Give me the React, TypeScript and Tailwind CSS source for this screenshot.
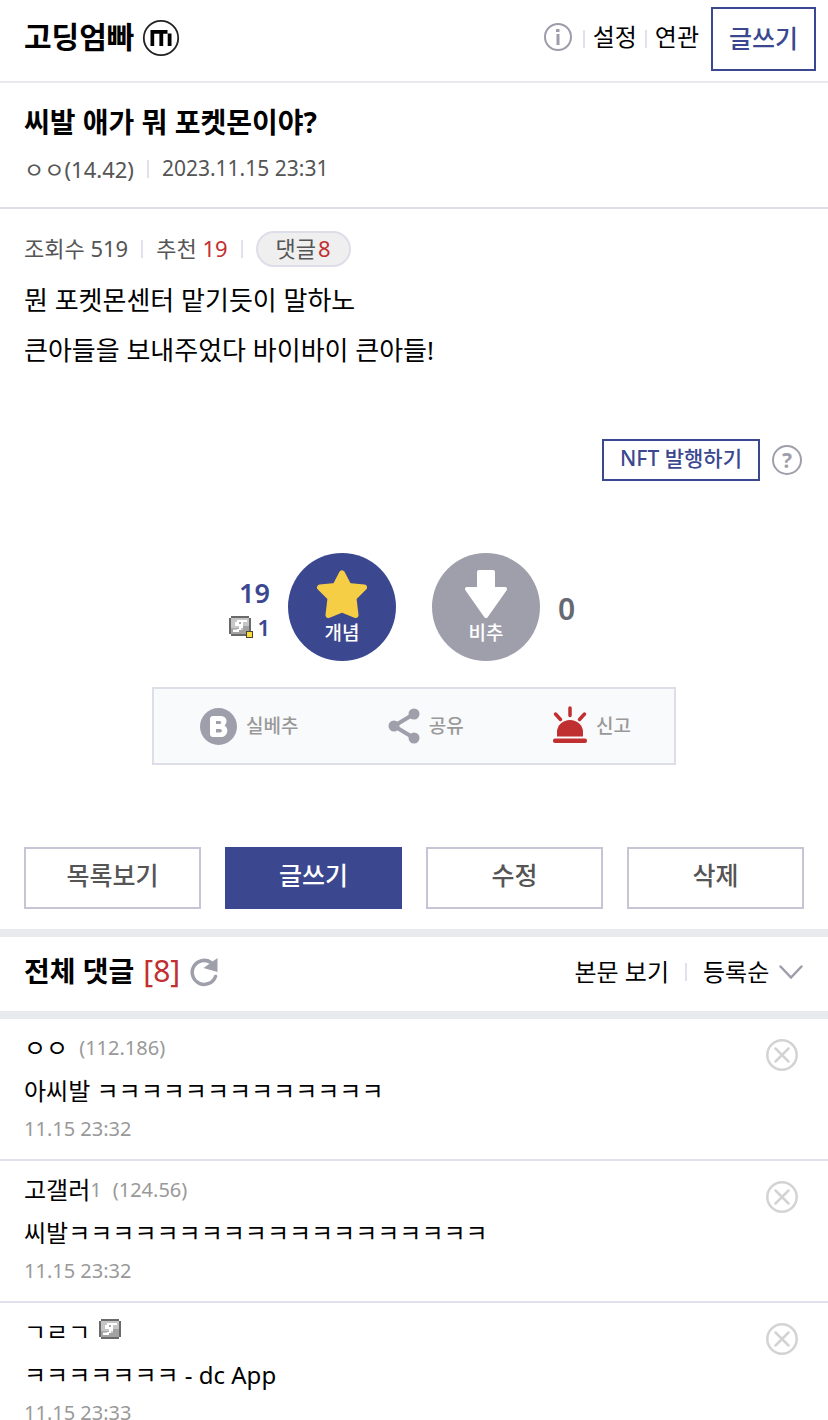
import type { ReactNode } from 'react'

type Comment = {
  id: number
  name: string
  suffix?: string
  ip?: string
  badge?: boolean
  text: string
  date: string
}

const comments: Comment[] = [
  { id: 1, name: 'ㅇㅇ', ip: '(112.186)', text: '아씨발 ㅋㅋㅋㅋㅋㅋㅋㅋㅋㅋㅋㅋㅋ', date: '11.15 23:32' },
  { id: 2, name: '고갤러', suffix: '1', ip: '(124.56)', text: '씨발ㅋㅋㅋㅋㅋㅋㅋㅋㅋㅋㅋㅋㅋㅋㅋㅋㅋㅋㅋ', date: '11.15 23:32' },
  { id: 3, name: 'ㄱㄹㄱ', badge: true, text: 'ㅋㅋㅋㅋㅋㅋㅋ - dc App', date: '11.15 23:33' },
]

const Bar = ({ className = '' }: { className?: string }) => (
  <span className={`h-[18px] w-[2px] bg-[#e0e0ee] ${className}`} />
)

// 고정닉 배지
const NickBadge = ({ half = false }: { half?: boolean }) => (
  <svg width="24" height="22" viewBox="0 0 24 22" shapeRendering="crispEdges" aria-hidden="true">
    <path d="M2 0h18v2h2v16h-2v2H2v-2H0V2h2z" fill="#6a6a6a" />
    <path d="M2 2h18v16H2z" fill="#a2a2a2" />
    <path d="M2 2h18v8h-6v4H4v-2H2z" fill="#c6c6c6" />
    <path d="M8 4h10v2h-4v6h-2v2h-2v2H4v-2h4v-2h2v-2H6V6h2z" fill="#fff" />
    <path d="M10 6h2v2h-2zM4 12h6v1H4z" fill="#a9a9a9" />
    {half && <path d="M17 15h7v7h-7z" fill="#4b4433" />}
    {half && <path d="M18 16h5v5h-5z" fill="#fbdc3f" />}
  </svg>
)

const Header = () => (
  <header className="flex h-[83px] items-center justify-between border-b-2 border-[#e9e9ef] pb-1 pl-6 pr-3">
    <div className="flex items-center gap-2 pb-[2px]">
      <h1 className="pb-[2px] text-[30px] leading-9 font-bold">
        <a href="#gallery">고딩엄빠</a>
      </h1>
      <svg width="38" height="38" viewBox="0 0 38 38" fill="none" aria-hidden="true">
        <circle cx="19" cy="19" r="17.200" stroke="#222" strokeWidth="1.800" />
        <path d="M8.500 11h17v3.800h-4.300V27h-3.800V14.800h-5.200V27H8.500zM25.700 14.500h3.800V27h-3.800z" fill="#000" />
      </svg>
    </div>
    <nav className="flex items-center text-2xl">
      <button type="button" aria-label="정보" className="pb-1">
        <svg width="28" height="28" viewBox="0 0 28 28" fill="none" aria-hidden="true">
          <circle cx="14" cy="14" r="13" stroke="#9d9daa" strokeWidth="2" />
          <path d="M12 6h3.500v3H12zM12.500 11h3v11h-3z" fill="#9d9daa" />
        </svg>
      </button>
      <Bar className="ml-[11px] mr-2" />
      <a href="#settings" className="pb-1">설정</a>
      <Bar className="mx-2" />
      <a href="#related" className="pb-1">연관</a>
      <a href="#write" className="ml-3 flex h-16 items-center border-2 border-[#3b4890] px-4 text-[25px] font-medium text-[#3b4890]">
        글쓰기
      </a>
    </nav>
  </header>
)

const Votes = () => (
  <div className="mt-[72px] flex items-center justify-center">
    <div className="flex w-[72px] flex-col items-end pt-[3px] pr-[18px] font-semibold text-[#3b4890]">
      <span className="text-[27px] leading-9">19</span>
      <span className="flex items-center gap-1 text-[22px] leading-8">
        <NickBadge half />1
      </span>
    </div>
    <button type="button" className="flex size-[108px] flex-col items-center rounded-full bg-[#3b4890] pt-4 text-[19px] leading-6 font-medium text-white">
      <svg width="52" height="52" viewBox="0 0 52 52" aria-hidden="true">
        <path
          d="M26 4.500l6.500 12.500 15.500 1.500L37.500 29l2 17L26 40.500 12.500 46l2-17L4 18.500 19.500 17z"
          fill="#f6ce46"
          stroke="#f6ce46"
          strokeWidth="6"
          strokeLinejoin="round"
        />
      </svg>
      개념
    </button>
    <button type="button" className="ml-9 flex size-[108px] flex-col items-center rounded-full bg-[#9f9fac] pt-4 text-[19px] leading-6 font-medium text-white">
      <svg width="52" height="52" viewBox="0 0 52 52" aria-hidden="true">
        <path
          d="M19 3h14v17h12L26 47 7 20h12z"
          fill="#fff"
          stroke="#fff"
          strokeWidth="4"
          strokeLinejoin="round"
        />
      </svg>
      비추
    </button>
    <span className="w-[72px] pt-[2px] pl-[18px] text-[30px] font-semibold text-[#666872]">0</span>
  </div>
)

const ShareButton = ({ icon, children }: { icon: ReactNode; children: ReactNode }) => (
  <button type="button" className="flex items-center gap-[9px] text-[19px] font-medium text-[#999]">
    {icon}
    {children}
  </button>
)

const Share = () => (
  <div className="mx-auto mt-[26px] flex h-[78px] w-[524px] max-w-full items-center justify-between border-2 border-[#dedee9] bg-[#f9fafc] pl-[46px] pr-[43px]">
    <ShareButton
      icon={
        <svg width="37" height="37" viewBox="0 0 37 37" aria-hidden="true">
          <circle cx="18.500" cy="18.500" r="18.500" fill="#9f9fac" />
          <path
            fillRule="evenodd"
            d="M13 8h7.500c4 0 6 2.400 6 5.200 0 1.900-.8 3.300-2 4.200 1.800 1 2.800 2.800 2.800 5 0 4-2.600 6.600-6.800 6.600H13c-1.800 0-3-1.200-3-3V11c0-1.800 1.200-3 3-3zm3 5v3h3.500c2.400 0 2.400-3 0-3zm0 8v3.500h4c2.500 0 2.500-3.500 0-3.500z"
            fill="#fff"
          />
        </svg>
      }
    >
      실베추
    </ShareButton>
    <ShareButton
      icon={
        <svg width="32" height="36" viewBox="0 0 32 36" fill="#9f9fac" aria-hidden="true">
          <path d="M26 6L6 18l20 12" fill="none" stroke="#9f9fac" strokeWidth="4" />
          <circle cx="26" cy="6" r="5.500" />
          <circle cx="6" cy="18" r="5.500" />
          <circle cx="26" cy="30" r="5.500" />
        </svg>
      }
    >
      공유
    </ShareButton>
    <ShareButton
      icon={
        <svg width="34" height="40" viewBox="0 0 34 40" fill="#c13030" aria-hidden="true">
          <path d="M17 2v7.500M2.500 8L7.500 13.500M31.500 8L26.500 13.500" stroke="#c13030" strokeWidth="3.500" strokeLinecap="round" />
          <path d="M4 30.500V26a13 12 0 0 1 26 0v4.500z" />
          <rect y="32.500" width="34" height="4.500" rx="2" />
        </svg>
      }
    >
      신고
    </ShareButton>
  </div>
)

const actions = ['목록보기', '글쓰기', '수정', '삭제']

const Actions = () => (
  <div className="mt-[82px] grid grid-cols-4 gap-6 px-6 pb-5">
    {actions.map((label) => (
      <button
        key={label}
        type="button"
        className={`h-[62px] border-2 pb-1 text-[25px] font-medium ${
          label === '글쓰기' ? 'border-[#3b4890] bg-[#3b4890] text-white' : 'border-[#c5c5d6] text-[#555]'
        }`}
      >
        {label}
      </button>
    ))}
  </div>
)

const CommentHeader = () => (
  <div className="flex h-[90px] items-center justify-between border-y-8 border-[#e9eaee] px-6 pb-1">
    <div className="flex items-center gap-[9px]">
      <h3 className="pb-[2px] text-[28px] font-bold">전체 댓글</h3>
      <span className="pb-1 text-[30px] text-[#c13030]">[8]</span>
      <button type="button" aria-label="새로고침">
        <svg width="30" height="30" viewBox="0 0 30 30" fill="none" aria-hidden="true">
          <path d="M26.500 19.500A12 12 0 1 1 22 5.500" stroke="#9f9fac" strokeWidth="3.500" strokeLinecap="round" />
          <path d="M28.500 1v14L14.500 11z" fill="#9f9fac" />
        </svg>
      </button>
    </div>
    <div className="flex items-center text-2xl">
      <a href="#post">본문 보기</a>
      <Bar className="mx-4" />
      <label className="flex items-center gap-2">
        <select aria-label="정렬" className="appearance-none bg-transparent">
          <option>등록순</option>
        </select>
        <svg width="26" height="16" viewBox="0 0 26 16" fill="none" aria-hidden="true">
          <path d="M2.500 2.500L13 13.500 23.500 2.500" stroke="#9d9daa" strokeWidth="2.500" strokeLinecap="round" />
        </svg>
      </label>
    </div>
  </div>
)

const CommentItem = ({ comment }: { comment: Comment }) => (
  <li className="flex items-start justify-between border-b-2 border-[#e0e0ee] px-6 pt-[11px] pb-[18px]">
    <div>
      <p className="flex h-9 items-center text-2xl">
        {comment.name}
        {comment.suffix && <span className="text-[20px] text-[#999]">{comment.suffix}</span>}
        {comment.ip && <span className="ml-[11px] text-[20px] text-[#999]">{comment.ip}</span>}
        {comment.badge && (
          <span className="ml-[9px] pb-1">
            <NickBadge />
          </span>
        )}
      </p>
      <p className="text-2xl leading-[50px]">{comment.text}</p>
      <p className="text-[20px] leading-[25px] text-[#999]">{comment.date}</p>
    </div>
    <button type="button" aria-label="삭제" className="mt-[9px] mr-[6px]">
      <svg width="32" height="32" viewBox="0 0 32 32" fill="none" stroke="#d3d3d3" strokeWidth="2.500" aria-hidden="true">
        <circle cx="16" cy="16" r="14.700" />
        <path d="M9.500 9.500l13 13M22.500 9.500l-13 13" strokeLinecap="round" />
      </svg>
    </button>
  </li>
)

const App = () => {
  return (
    <div className="bg-white font-['Noto_Sans','Noto_Sans_CJK_KR',sans-serif] text-black">
      <Header />
      <main>
        <div className="border-b-2 border-[#dedeeb] px-6 pt-[19px] pb-[21px]">
          <h2 className="text-[28px] leading-10 font-bold">씨발 애가 뭐 포켓몬이야?</h2>
          <div className="mt-[10px] flex h-[34px] items-center text-[22px] text-[#555]">
            <span>ㅇㅇ(14.42)</span>
            <Bar className="mx-[13px]" />
            <span className="text-[21px]">2023.11.15 23:31</span>
          </div>
        </div>

        <article className="px-6 pt-[22px]">
          <div className="flex h-9 items-center text-[22px] text-[#555]">
            <span className="pb-[2px]">조회수 519</span>
            <Bar className="mx-[13px]" />
            <span className="pb-[2px]">
              추천 <span className="text-[#c13030]">19</span>
            </span>
            <Bar className="mx-[13px]" />
            <a href="#comments" className="flex h-9 items-center rounded-full border-2 border-[#dedeeb] bg-[#efefef] px-[18px] pb-[2px]">
              댓글<span className="ml-[2px] text-[#c13030]">8</span>
            </a>
          </div>
          <div className="mt-2 text-[26px] leading-[50px]">
            <p>뭔 포켓몬센터 맡기듯이 말하노</p>
            <p>큰아들을 보내주었다 바이바이 큰아들!</p>
          </div>
          <div className="mt-16 flex items-center justify-end gap-3">
            <button type="button" className="h-[42px] border-2 border-[#3b4890] px-4 pb-1 text-[21px] leading-8 font-medium text-[#3b4890]">
              NFT 발행하기
            </button>
            <button type="button" aria-label="도움말" className="mr-[2px] flex size-[30px] items-center justify-center rounded-full border-2 border-[#9f9fac] text-[21px] leading-6 font-bold text-[#9f9fac]">
              ?
            </button>
          </div>
          <Votes />
          <Share />
        </article>
        <Actions />

        <section id="comments">
          <CommentHeader />
          <ul>
            {comments.map((comment) => (
              <CommentItem key={comment.id} comment={comment} />
            ))}
          </ul>
        </section>
      </main>
    </div>
  )
}

export default App
